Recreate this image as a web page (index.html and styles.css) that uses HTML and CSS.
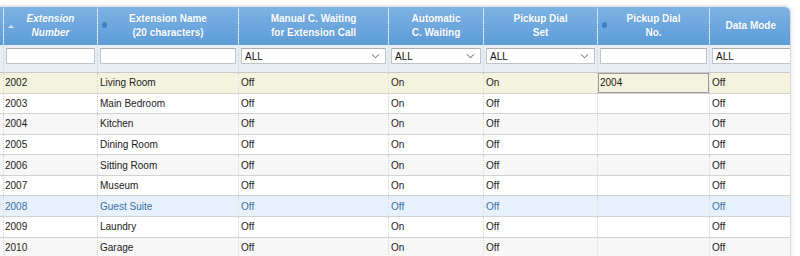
FILE: index.html
```html
<!DOCTYPE html>
<html lang="en">
  <head>
    <meta charset="UTF-8" />
    <title>Extensions</title>
    <link rel="stylesheet" href="styles.css">
  </head>
  <body>
    <div class="grid-wrap">
      <table class="grid">
        <colgroup>
          <col class="c-edge" />
          <col class="c-num" />
          <col class="c-name" />
          <col class="c-manual" />
          <col class="c-auto" />
          <col class="c-pset" />
          <col class="c-pno" />
          <col class="c-data" />
        </colgroup>
        <thead>
          <tr class="head">
            <th></th>
            <th class="sorted"><span class="arrow"></span>Extension<br />Number</th>
            <th><span class="dot"></span>Extension Name<br />(20 characters)</th>
            <th>Manual C. Waiting<br />for Extension Call</th>
            <th>Automatic<br />C. Waiting</th>
            <th>Pickup Dial<br />Set</th>
            <th><span class="dot"></span>Pickup Dial<br />No.</th>
            <th>Data Mode</th>
          </tr>
          <tr class="filters">
            <td></td>
            <td><div class="box"></div></td>
            <td><div class="box"></div></td>
            <td><div class="box select">ALL<svg viewBox="0 0 10 6"><path d="M1 1l4 4 4-4" /></svg></div></td>
            <td><div class="box select">ALL<svg viewBox="0 0 10 6"><path d="M1 1l4 4 4-4" /></svg></div></td>
            <td><div class="box select">ALL<svg viewBox="0 0 10 6"><path d="M1 1l4 4 4-4" /></svg></div></td>
            <td><div class="box"></div></td>
            <td><div class="box select wide">ALL<svg viewBox="0 0 10 6"><path d="M1 1l4 4 4-4" /></svg></div></td>
          </tr>
        </thead>
        <tbody>
          <tr class="editing">
            <td></td><td>2002</td><td>Living Room</td><td>Off</td><td>On</td><td>On</td>
            <td class="edit-cell"><div class="edit-box">2004</div></td><td>Off</td>
          </tr>
          <tr>
            <td></td><td>2003</td><td>Main Bedroom</td><td>Off</td><td>On</td><td>Off</td><td></td><td>Off</td>
          </tr>
          <tr class="alt">
            <td></td><td>2004</td><td>Kitchen</td><td>Off</td><td>On</td><td>Off</td><td></td><td>Off</td>
          </tr>
          <tr>
            <td></td><td>2005</td><td>Dining Room</td><td>Off</td><td>On</td><td>Off</td><td></td><td>Off</td>
          </tr>
          <tr class="alt">
            <td></td><td>2006</td><td>Sitting Room</td><td>Off</td><td>On</td><td>Off</td><td></td><td>Off</td>
          </tr>
          <tr>
            <td></td><td>2007</td><td>Museum</td><td>Off</td><td>On</td><td>Off</td><td></td><td>Off</td>
          </tr>
          <tr class="hover">
            <td></td><td>2008</td><td>Guest Suite</td><td>Off</td><td>Off</td><td>Off</td><td></td><td>Off</td>
          </tr>
          <tr>
            <td></td><td>2009</td><td>Laundry</td><td>Off</td><td>On</td><td>Off</td><td></td><td>Off</td>
          </tr>
          <tr class="alt">
            <td></td><td>2010</td><td>Garage</td><td>Off</td><td>On</td><td>Off</td><td></td><td>Off</td>
          </tr>
        </tbody>
      </table>
    </div>
  </body>
</html>
```

FILE: styles.css
```css
* {
  margin: 0;
  padding: 0;
  box-sizing: border-box;
}

body {
  font-family: "Liberation Sans", Arial, sans-serif;
  font-size: 10px;
  color: #1a1a1a;
  background: #fff;
  padding-top: 5px;
  overflow: hidden;
}

.grid-wrap {
  width: 792px;
  margin-left: -1px;
  border-top: 2px solid #e4e6e8;
  border-right: 1px solid #d8dadc;
  border-top-right-radius: 7px;
  overflow: hidden;
  box-shadow: 2px 0 3px rgba(0, 0, 0, 0.06);
}

.grid {
  width: 792px;
  table-layout: fixed;
  border-collapse: collapse;
}

.c-edge { width: 4px; }
.c-num { width: 94px; }
.c-name { width: 141px; }
.c-manual { width: 150px; }
.c-auto { width: 95px; }
.c-pset { width: 114px; }
.c-pno { width: 112px; }
.c-data { width: 82px; }

/* header */
.head th {
  height: 38px;
  background: linear-gradient(#7db2e3, #5d9cd8);
  color: #fff;
  font-weight: bold;
  font-size: 10px;
  line-height: 14px;
  text-align: center;
  position: relative;
  border-left: 1px dotted #a9c9ea;
  text-shadow: 0 0 1px rgba(40, 90, 150, 0.3);
}

.head th:first-child {
  border-left: none;
}

.head th.sorted {
  font-style: italic;
}

.arrow {
  position: absolute;
  left: 4px;
  top: 18px;
  width: 0;
  height: 0;
  border-left: 3px solid transparent;
  border-right: 3px solid transparent;
  border-bottom: 3px solid #d4e6f7;
}

.dot {
  position: absolute;
  left: 4px;
  top: 15px;
  width: 5px;
  height: 6px;
  border-radius: 50%;
  background: #3f7fc2;
}

/* filter row */
.filters td {
  height: 27px;
  background: #e8eef4;
  border-left: 1px dotted #c9d6e2;
  border-bottom: 1px solid #c8c8c8;
  padding: 3px 2px 7px 2px;
  vertical-align: top;
  overflow: visible;
}

.filters td:first-child {
  border-left: none;
}

.box {
  height: 16px;
  background: #fff;
  border: 1px solid #bfc4c9;
  border-top-color: #a9adb2;
}

.select {
  display: flex;
  align-items: center;
  justify-content: space-between;
  padding: 0 5px 0 3px;
  font-size: 10px;
  color: #111;
}

.select svg {
  width: 9px;
  height: 6px;
  fill: none;
  stroke: #555;
  stroke-width: 1.1;
}

.select.wide {
  width: 92px;
}

/* body rows */
tbody td {
  height: 20.6px;
  padding: 0 2px;
  border-left: 1px dotted #cfcfcf;
  border-bottom: 1px solid #d2d2d2;
  white-space: nowrap;
  overflow: hidden;
  background: #fff;
}

tbody td:first-child {
  border-left: 1px dotted #c3cede;
  padding: 0;
}

tbody td:nth-child(2) {
  padding-left: 1px;
}

tbody tr.alt td {
  background: #f7f7f7;
}

tbody tr.editing td {
  background: #f4f3dd;
}

tbody tr.hover td {
  background: #e7f1fb;
  color: #3b6ea6;
}

tbody td.edit-cell {
  padding: 0;
}

.edit-box {
  height: 20px;
  border: 1px solid #9a9a9a;
  padding: 0 1px;
  line-height: 18px;
}
```
